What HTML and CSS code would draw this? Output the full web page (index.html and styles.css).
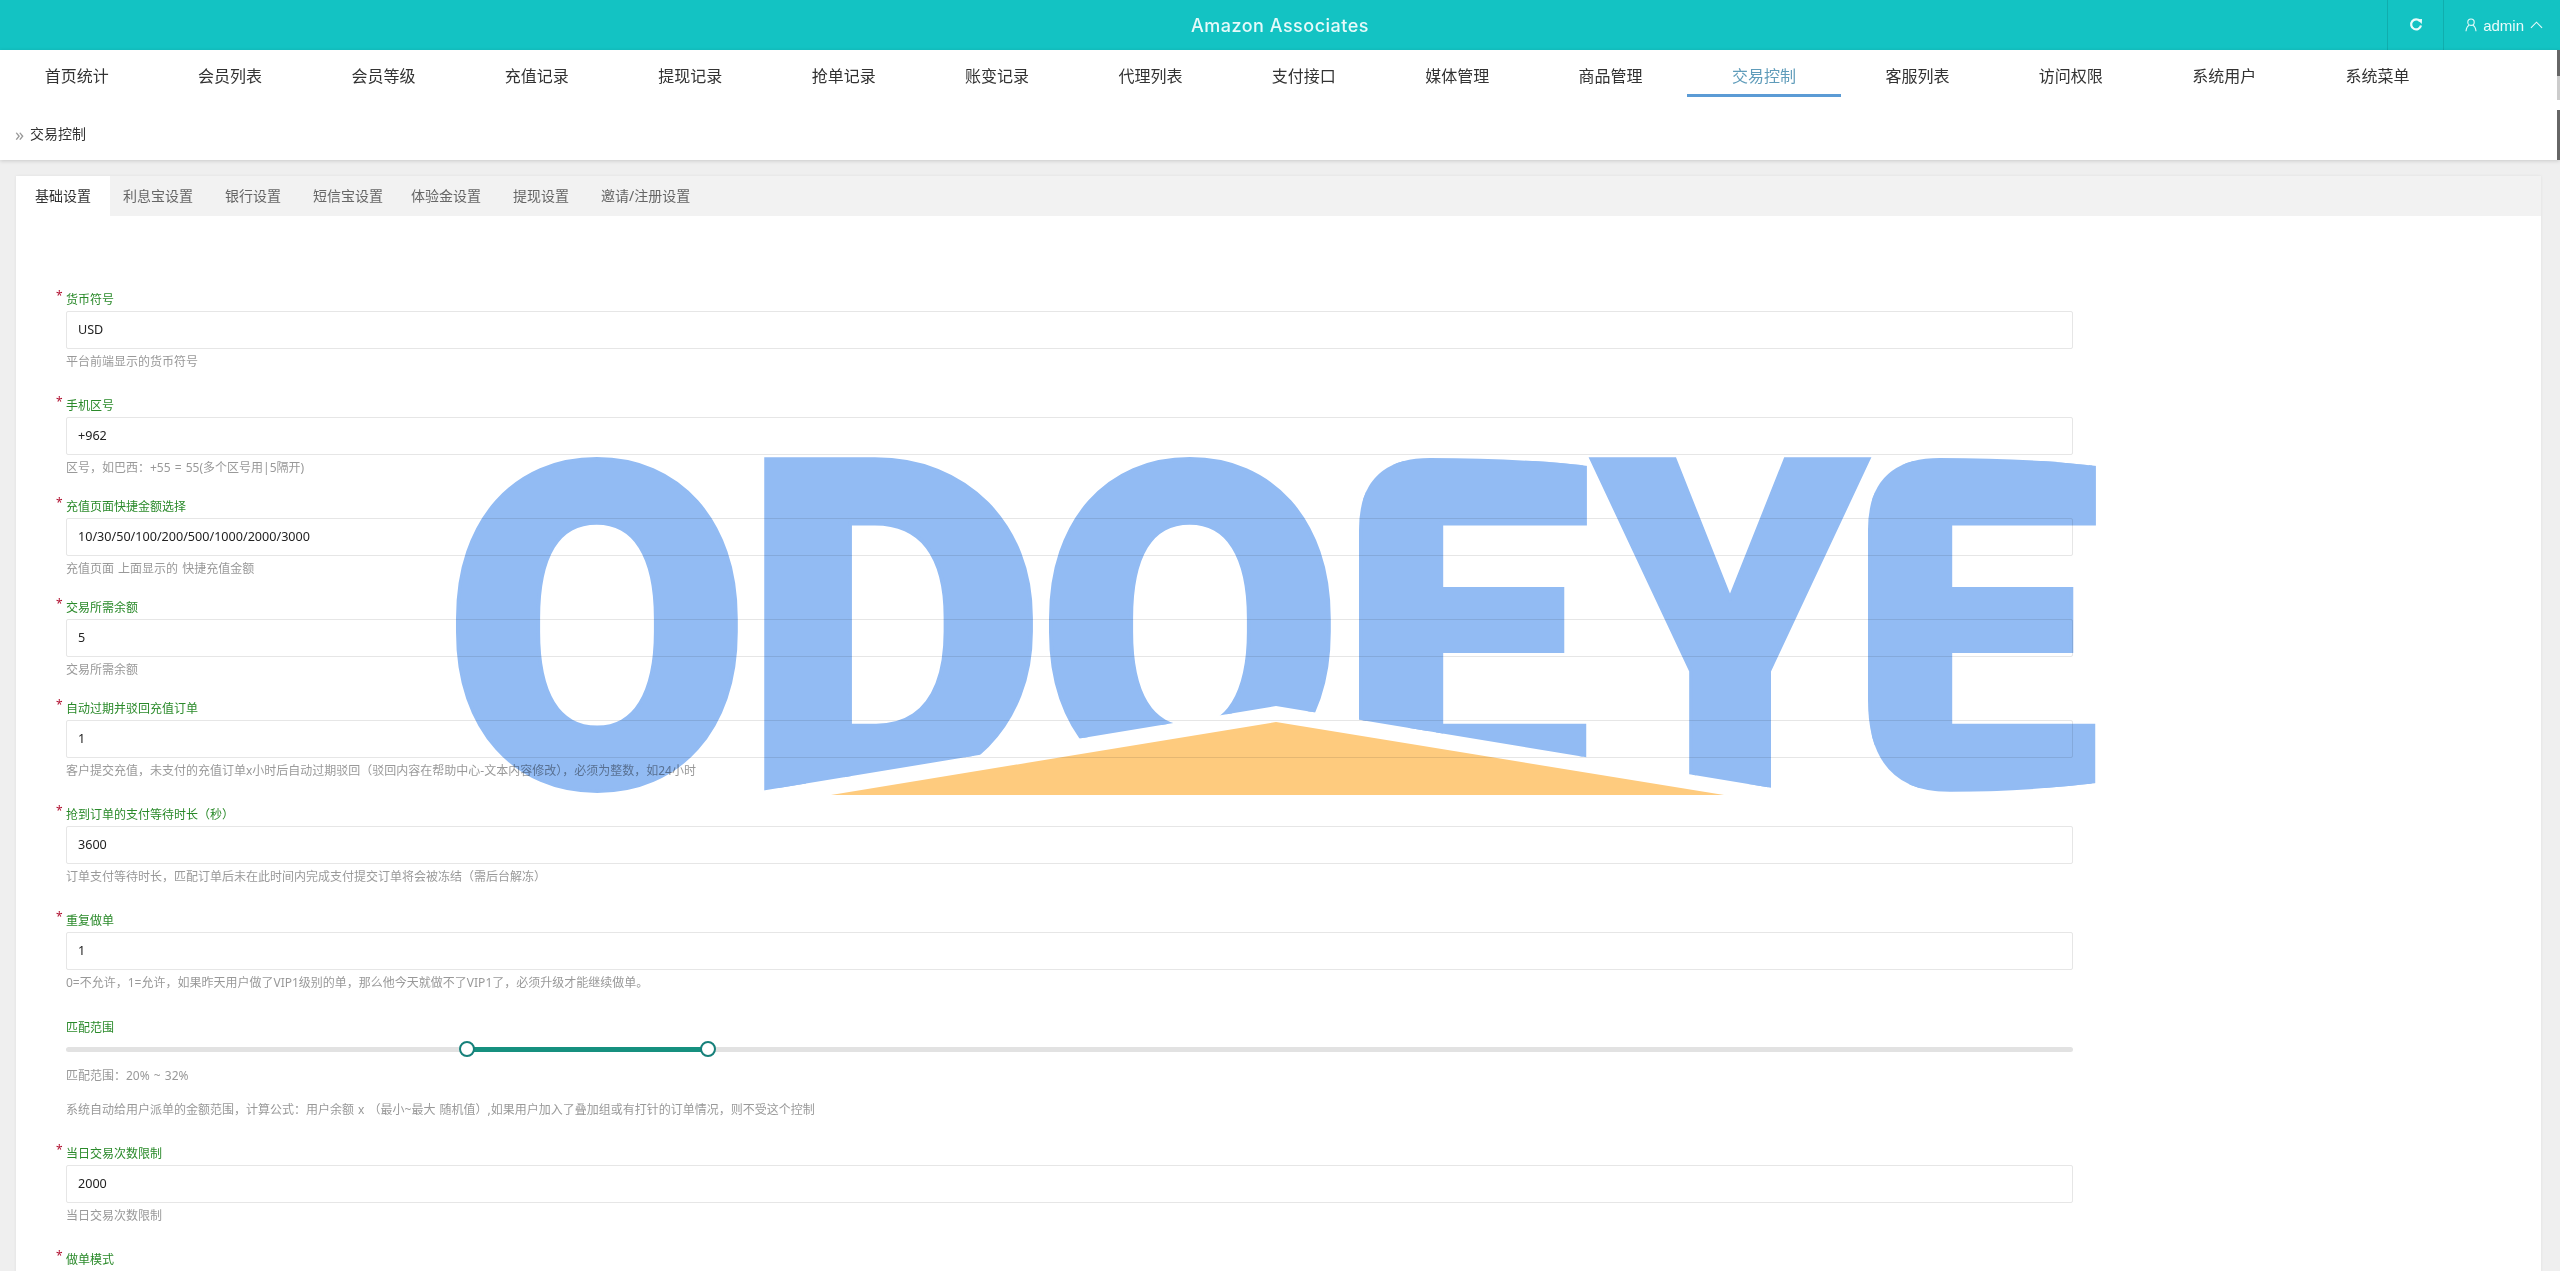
FILE: index.html
```html
<!DOCTYPE html>
<html lang="zh-CN">
<head>
<meta charset="utf-8">
<title>交易控制</title>
<link rel="stylesheet" href="styles.css">
</head>
<body>
<header class="topbar">
  <div class="brand">Amazon Associates</div>
  <div class="top-tools">
    <div class="tool tool-refresh">
      <svg class="icon-refresh" viewBox="0 0 14 14" width="14" height="14"><path d="M11 3.2A5 5 0 1 0 12 7.6" fill="none" stroke="currentColor" stroke-width="2.2"/><path d="M8 1.2 L13 1 L12.8 6 Z" fill="currentColor"/></svg>
    </div>
    <div class="tool tool-user">
      <svg viewBox="0 0 12 14" width="12" height="14"><circle cx="6" cy="4.2" r="3.2" fill="none" stroke="currentColor" stroke-width="1.1"/><path d="M1 13.2 C1.4 9.6 3.2 7.6 4.3 7.2 M11 13.2 C10.6 9.6 8.8 7.6 7.7 7.2" fill="none" stroke="currentColor" stroke-width="1.1"/></svg>
      <span class="user-name">admin</span>
      <svg viewBox="0 0 14 8" width="13" height="8"><path d="M1 7 L7 1 L13 7" fill="none" stroke="currentColor" stroke-width="1.2"/></svg>
    </div>
  </div>
</header>

<section class="head-panel">
  <nav class="menu">
    <a class="menu-item">首页统计</a>
    <a class="menu-item">会员列表</a>
    <a class="menu-item">会员等级</a>
    <a class="menu-item">充值记录</a>
    <a class="menu-item">提现记录</a>
    <a class="menu-item">抢单记录</a>
    <a class="menu-item">账变记录</a>
    <a class="menu-item">代理列表</a>
    <a class="menu-item">支付接口</a>
    <a class="menu-item">媒体管理</a>
    <a class="menu-item">商品管理</a>
    <a class="menu-item is-active">交易控制</a>
    <a class="menu-item">客服列表</a>
    <a class="menu-item">访问权限</a>
    <a class="menu-item">系统用户</a>
    <a class="menu-item">系统菜单</a>
  </nav>
  <div class="crumb"><span class="crumb-mark">»</span><span>交易控制</span></div>
</section>

<main class="content">
  <div class="card">
    <div class="tabs">
      <a class="tab is-current">基础设置</a>
      <a class="tab">利息宝设置</a>
      <a class="tab">银行设置</a>
      <a class="tab tab-narrow">短信宝设置</a>
      <a class="tab tab-narrow">体验金设置</a>
      <a class="tab">提现设置</a>
      <a class="tab">邀请/注册设置</a>
    </div>
    <form class="form">
      <div class="field">
        <label class="label req">货币符号</label>
        <div class="input">USD</div>
        <p class="help">平台前端显示的货币符号</p>
      </div>
      <div class="field field-tight">
        <label class="label req">手机区号</label>
        <div class="input">+962</div>
        <p class="help">区号，如巴西：+55 = 55(多个区号用|5隔开)</p>
      </div>
      <div class="field field-tight">
        <label class="label req">充值页面快捷金额选择</label>
        <div class="input">10/30/50/100/200/500/1000/2000/3000</div>
        <p class="help">充值页面 上面显示的 快捷充值金额</p>
      </div>
      <div class="field field-tight">
        <label class="label req">交易所需余额</label>
        <div class="input">5</div>
        <p class="help">交易所需余额</p>
      </div>
      <div class="field">
        <label class="label req">自动过期并驳回充值订单</label>
        <div class="input">1</div>
        <p class="help">客户提交充值，未支付的充值订单x小时后自动过期驳回（驳回内容在帮助中心-文本内容修改），必须为整数，如24小时</p>
      </div>
      <div class="field">
        <label class="label req">抢到订单的支付等待时长（秒）</label>
        <div class="input">3600</div>
        <p class="help">订单支付等待时长，匹配订单后未在此时间内完成支付提交订单将会被冻结（需后台解冻）</p>
      </div>
      <div class="field field-wide">
        <label class="label req">重复做单</label>
        <div class="input">1</div>
        <p class="help">0=不允许，1=允许，如果昨天用户做了VIP1级别的单，那么他今天就做不了VIP1了，必须升级才能继续做单。</p>
      </div>
      <div class="field field-range">
        <label class="label">匹配范围</label>
        <div class="slider">
          <div class="slider-fill"></div>
          <span class="thumb thumb-min"></span>
          <span class="thumb thumb-max"></span>
        </div>
        <p class="help help-value">匹配范围：20% ~ 32%</p>
        <p class="help help-desc">系统自动给用户派单的金额范围，计算公式：用户余额 x （最小~最大 随机值）,如果用户加入了叠加组或有打针的订单情况，则不受这个控制</p>
      </div>
      <div class="field">
        <label class="label req">当日交易次数限制</label>
        <div class="input">2000</div>
        <p class="help">当日交易次数限制</p>
      </div>
      <div class="field">
        <label class="label req">做单模式</label>
        <div class="input"></div>
      </div>
    </form>
  </div>
</main>

<div class="edge-bar"></div>

<svg class="watermark" viewBox="0 0 2560 1271" width="2560" height="1271" role="img" aria-label="ODOEYE">
  <defs>
    <clipPath id="roof"><polygon points="400,440 2097,440 2097,806 1864,803 1276,706 688,803 400,806"/></clipPath>
    <clipPath id="e-one"><path d="M1359 800V530Q1359 458 1430 458Q1520 458 1588 466V800Z"/></clipPath>
    <clipPath id="e-two"><path d="M1868 700V530Q1868 458 1940 458Q2030 458 2097 466V783Q2020 792 1950 792Q1868 792 1868 700Z"/></clipPath>
  </defs>
  <g class="wm-letters" clip-path="url(#roof)" text-anchor="middle">
    <text transform="translate(597 785) scale(4.42 4.5)">O</text>
    <text transform="translate(894 788) scale(4.68 4.6)">D</text>
    <text transform="translate(1190 785) scale(4.42 4.5)">O</text>
    <g clip-path="url(#e-one)"><text transform="translate(1464 788) scale(4.5 4.6)">E</text></g>
    <text transform="translate(1730 788) scale(4.3 4.6)">Y</text>
    <g clip-path="url(#e-two)"><text transform="translate(1973 788) scale(4.5 4.6)">E</text></g>
  </g>
  <polygon class="wm-roof" points="1276,722 831,795 1724,795"/>
</svg>
</body>
</html>
```
FILE: styles.css
```css
* { box-sizing: border-box; }
html, body { height: 100%; margin: 0; }
body {
  background: #efefef;
  color: #333;
  font-family: "Noto Sans", "Noto Sans CJK SC", sans-serif;
  font-size: 12px;
  overflow: hidden;
}

.topbar {
  height: 50px;
  background: #13c3c3;
  color: #e9fbfb;
  display: flex;
  align-items: center;
  justify-content: flex-end;
  position: relative;
}
.brand {
  position: absolute;
  left: 0;
  right: 0;
  text-align: center;
  font-family: Inter, "Noto Sans", sans-serif;
  font-weight: 500;
  font-size: 18px;
  letter-spacing: 0.5px;
  color: #e6fafa;
}
.top-tools { display: flex; height: 50px; position: relative; padding-right: 17px; }
.tool { display: flex; align-items: center; justify-content: center; border-left: 1px solid #10adad; }
.tool-refresh { width: 56px; }
.tool-user { gap: 6px; padding-left: 21px; }
.user-name { font-family: "Liberation Sans", sans-serif; font-size: 15px; line-height: 1; }

.head-panel {
  height: 110px;
  background: #fff;
  box-shadow: 0 1px 4px rgba(0, 0, 0, 0.16);
  position: relative;
}
.menu { display: flex; height: 47px; }
.menu-item {
  flex: 0 0 153.4px;
  height: 47px;
  padding-top: 13px;
  text-align: center;
  font-size: 16px;
  line-height: 26px;
  color: #333;
}
.menu-item.is-active { color: #5f9cba; border-bottom: 3px solid #5b9bd5; }
.crumb {
  height: 24px;
  margin-top: 25px;
  padding-left: 15px;
  display: flex;
  align-items: center;
  font-size: 14px;
  line-height: 24px;
  color: #333;
}
.crumb-mark { color: #999; width: 15px; font-size: 18px; }

.content { padding: 16px 19px 0 16px; }
.card {
  background: #fff;
  box-shadow: 0 0 3px rgba(0, 0, 0, 0.07);
}
.tabs { display: flex; height: 40px; background: #f2f2f2; }
.tab {
  padding: 0 16px;
  font-size: 14px;
  line-height: 40px;
  color: #666;
}
.tab:nth-child(2) { padding-left: 13px; }
.tab.is-current { width: 94px; padding: 0 19px; background: #fff; color: #333; }
.tab-narrow { padding-right: 14px; }
.tab-narrow + .tab-narrow { padding-left: 14px; padding-right: 16px; }

.form { padding: 74px 468px 0 50px; }
.field { margin-bottom: 24px; }
.field-tight { margin-bottom: 19px; }
.field-wide { margin-bottom: 25px; }
.field-range { margin-bottom: 24px; }
.label {
  display: block;
  position: relative;
  height: 18px;
  margin-bottom: 3px;
  font-size: 12px;
  line-height: 20px;
  color: #2a8a2a;
}
.req::before {
  content: "*";
  position: absolute;
  left: -10px;
  top: -4px;
  color: #b01030;
  font-size: 12px;
}
.input {
  height: 38px;
  padding-left: 11px;
  background: #fff;
  border: 1px solid #e6e6e6;
  border-radius: 2px;
  font-size: 12.6px;
  line-height: 36px;
  color: #222;
}
.help {
  height: 21px;
  margin: 2px 0 0;
  font-size: 12px;
  line-height: 22px;
  word-spacing: 1px;
  color: #999;
}
.slider {
  position: relative;
  height: 5px;
  margin: 11px 0 13px;
  background: #e2e2e2;
  border-radius: 3px;
}
.slider-fill {
  position: absolute;
  left: 20%;
  width: 12%;
  top: 0;
  bottom: 0;
  background: #16907f;
}
.thumb {
  position: absolute;
  top: -6px;
  width: 16px;
  height: 16px;
  margin-left: -8px;
  background: #fff;
  border: 2px solid #16807a;
  border-radius: 50%;
}
.thumb-min { left: 20%; }
.thumb-max { left: 32%; }
.help-value { margin-top: 0; }
.help-desc { margin-top: 13px; }

.edge-bar {
  position: absolute;
  right: 0;
  top: 50px;
  width: 3px;
  height: 110px;
  background: linear-gradient(#666 0 26px, #ccc 26px 50px, #fff 50px 60px, #666 60px);
}

.watermark {
  position: absolute;
  left: 0;
  top: 0;
  pointer-events: none;
  mix-blend-mode: multiply;
}
.wm-letters {
  font-family: Roboto, "Noto Sans", sans-serif;
  font-weight: 900;
  font-size: 100px;
  fill: #92bbf3;
  stroke: #92bbf3;
  stroke-width: 1.6px;
  paint-order: stroke;
}
.wm-roof { fill: #fecb7e; }
```
